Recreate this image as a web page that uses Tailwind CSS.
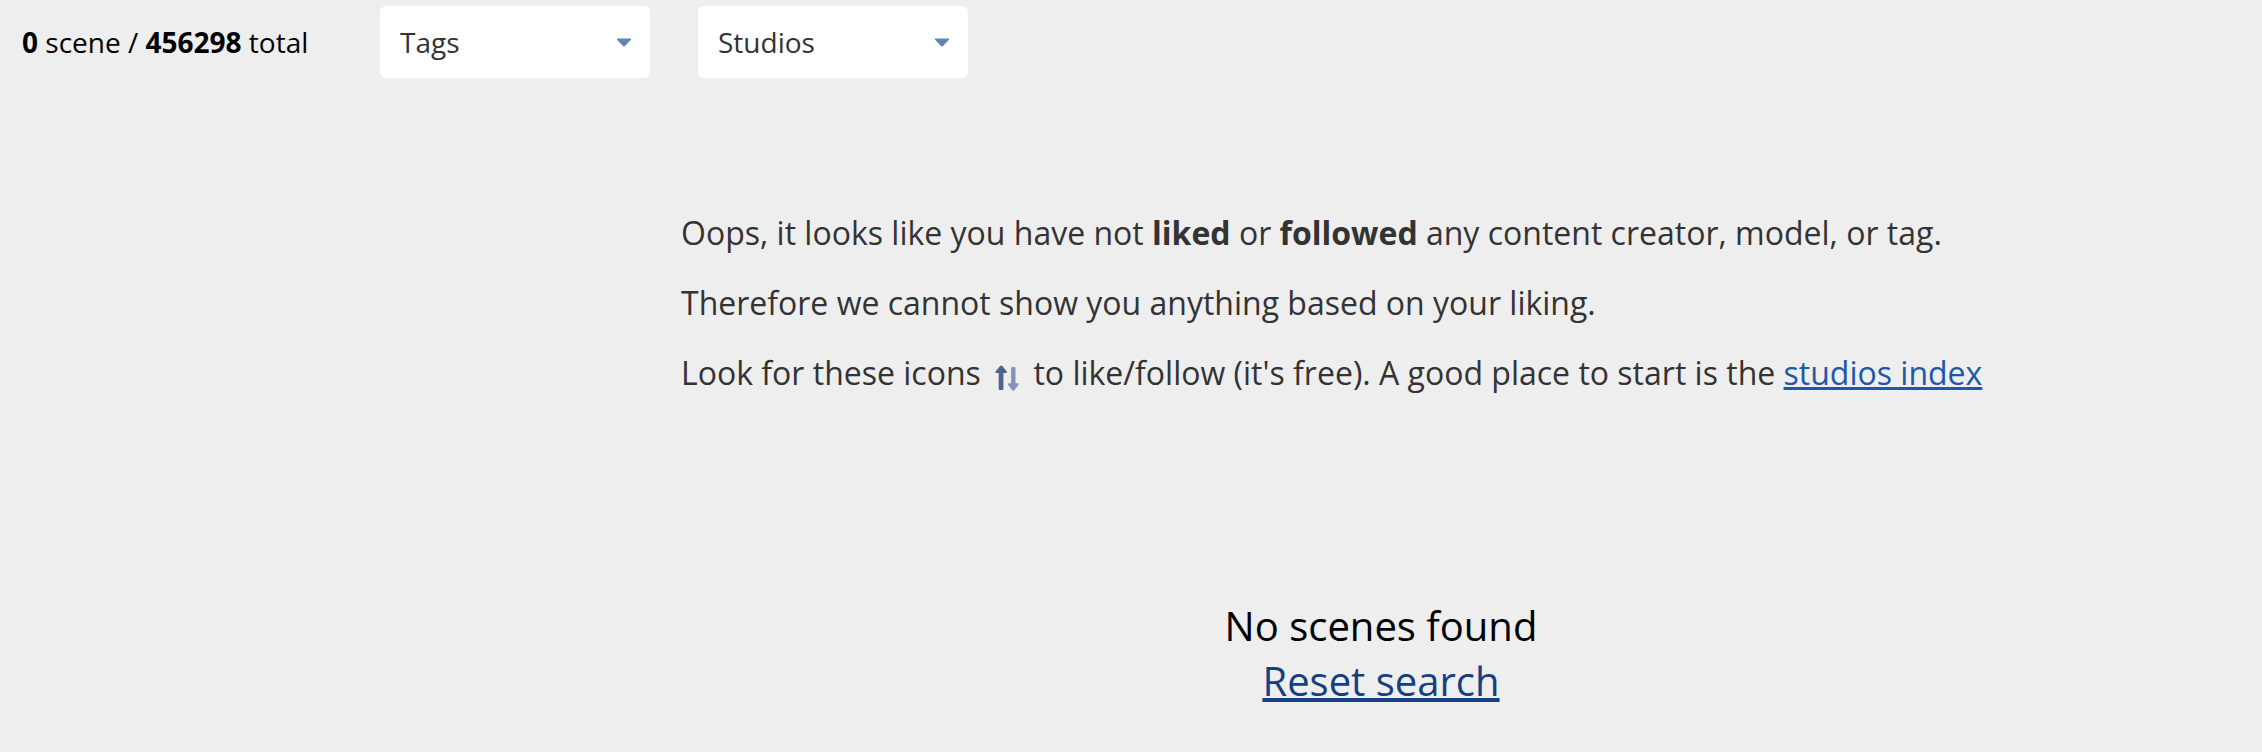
<!DOCTYPE html>
<html lang="en">
  <head>
    <meta charset="UTF-8" />
    <meta name="viewport" content="width=device-width, initial-scale=1.0" />
    <title>Scenes</title>
    <script src="https://cdn.jsdelivr.net/npm/@tailwindcss/browser@4"></script>
  </head>
  <body class="min-h-screen bg-[#eeeeee] font-['Open_Sans',sans-serif] text-black">
    <!-- Filter bar -->
    <header class="flex items-center gap-12 py-1.5 pl-[22px] text-[28px] leading-[38px]">
      <p class="w-[310px] whitespace-nowrap"><b>0</b> scene / <b>456298</b> total</p>

      <div class="relative w-[270px]">
        <select aria-label="Tags" class="block h-[72px] w-full appearance-none rounded-md bg-white px-5 text-[#333333]">
          <option>Tags</option>
        </select>
        <svg class="pointer-events-none absolute top-8 right-[18px] h-[9px] w-4" viewBox="0 0 16 9" fill="#5f84b5">
          <path d="M1.500.5h13q1 .3.4 1.300L9.300 7.800q-1.300 1.200-2.600 0L1.100 1.800Q.5.800 1.500.5z" />
        </svg>
      </div>

      <div class="relative w-[270px]">
        <select aria-label="Studios" class="block h-[72px] w-full appearance-none rounded-md bg-white px-5 text-[#333333]">
          <option>Studios</option>
        </select>
        <svg class="pointer-events-none absolute top-8 right-[18px] h-[9px] w-4" viewBox="0 0 16 9" fill="#5f84b5">
          <path d="M1.500.5h13q1 .3.4 1.300L9.300 7.800q-1.300 1.200-2.600 0L1.100 1.800Q.5.800 1.500.5z" />
        </svg>
      </div>
    </header>

    <!-- Results, right of the sidebar column -->
    <main class="ml-[500px] pt-[130px]">
      <div class="mx-auto flex max-w-[1400px] flex-col gap-8 text-[32px] leading-[38px] text-[#333333]">
        <p>Oops, it looks like you have not <b>liked</b> or <b>followed</b> any content creator, model, or tag.</p>
        <p>Therefore we cannot show you anything based on your liking.</p>
        <p>
          Look for these icons
          <svg class="mx-1.5 inline-block h-[26px] w-6 align-[-6px]" viewBox="0 0 24 26">
            <path fill="#4d628c" d="M5.100.9q1.100-1 2.200 0l4.300 5.300q.9 1.700-.8 1.800H8.400v15.800q0 1.200-1.200 1.200H4.900q-1.200 0-1.200-1.200V8H1.400Q-.2 7.900.7 6.200z" />
            <path fill="#8593b5" d="M17.200 25.300q1.100.9 2.200 0l4-5.300q.8-1.600-.7-1.700h-2.200V3.200q0-1.200-1.200-1.200h-2q-1.200 0-1.200 1.200v15.100H14q-1.700.1-.8 1.700z" />
          </svg>
          to like/follow (it's free). A good place to start is the
          <a href="#" class="text-[#1f57a9] underline decoration-[3px] underline-offset-2">studios index</a>
        </p>
      </div>

      <div class="mt-[206px] text-center text-[40px] leading-[55px]">
        <p>No scenes found</p>
        <a href="#" class="text-[#163e83] underline decoration-4 underline-offset-2">Reset search</a>
      </div>
    </main>
  </body>
</html>
